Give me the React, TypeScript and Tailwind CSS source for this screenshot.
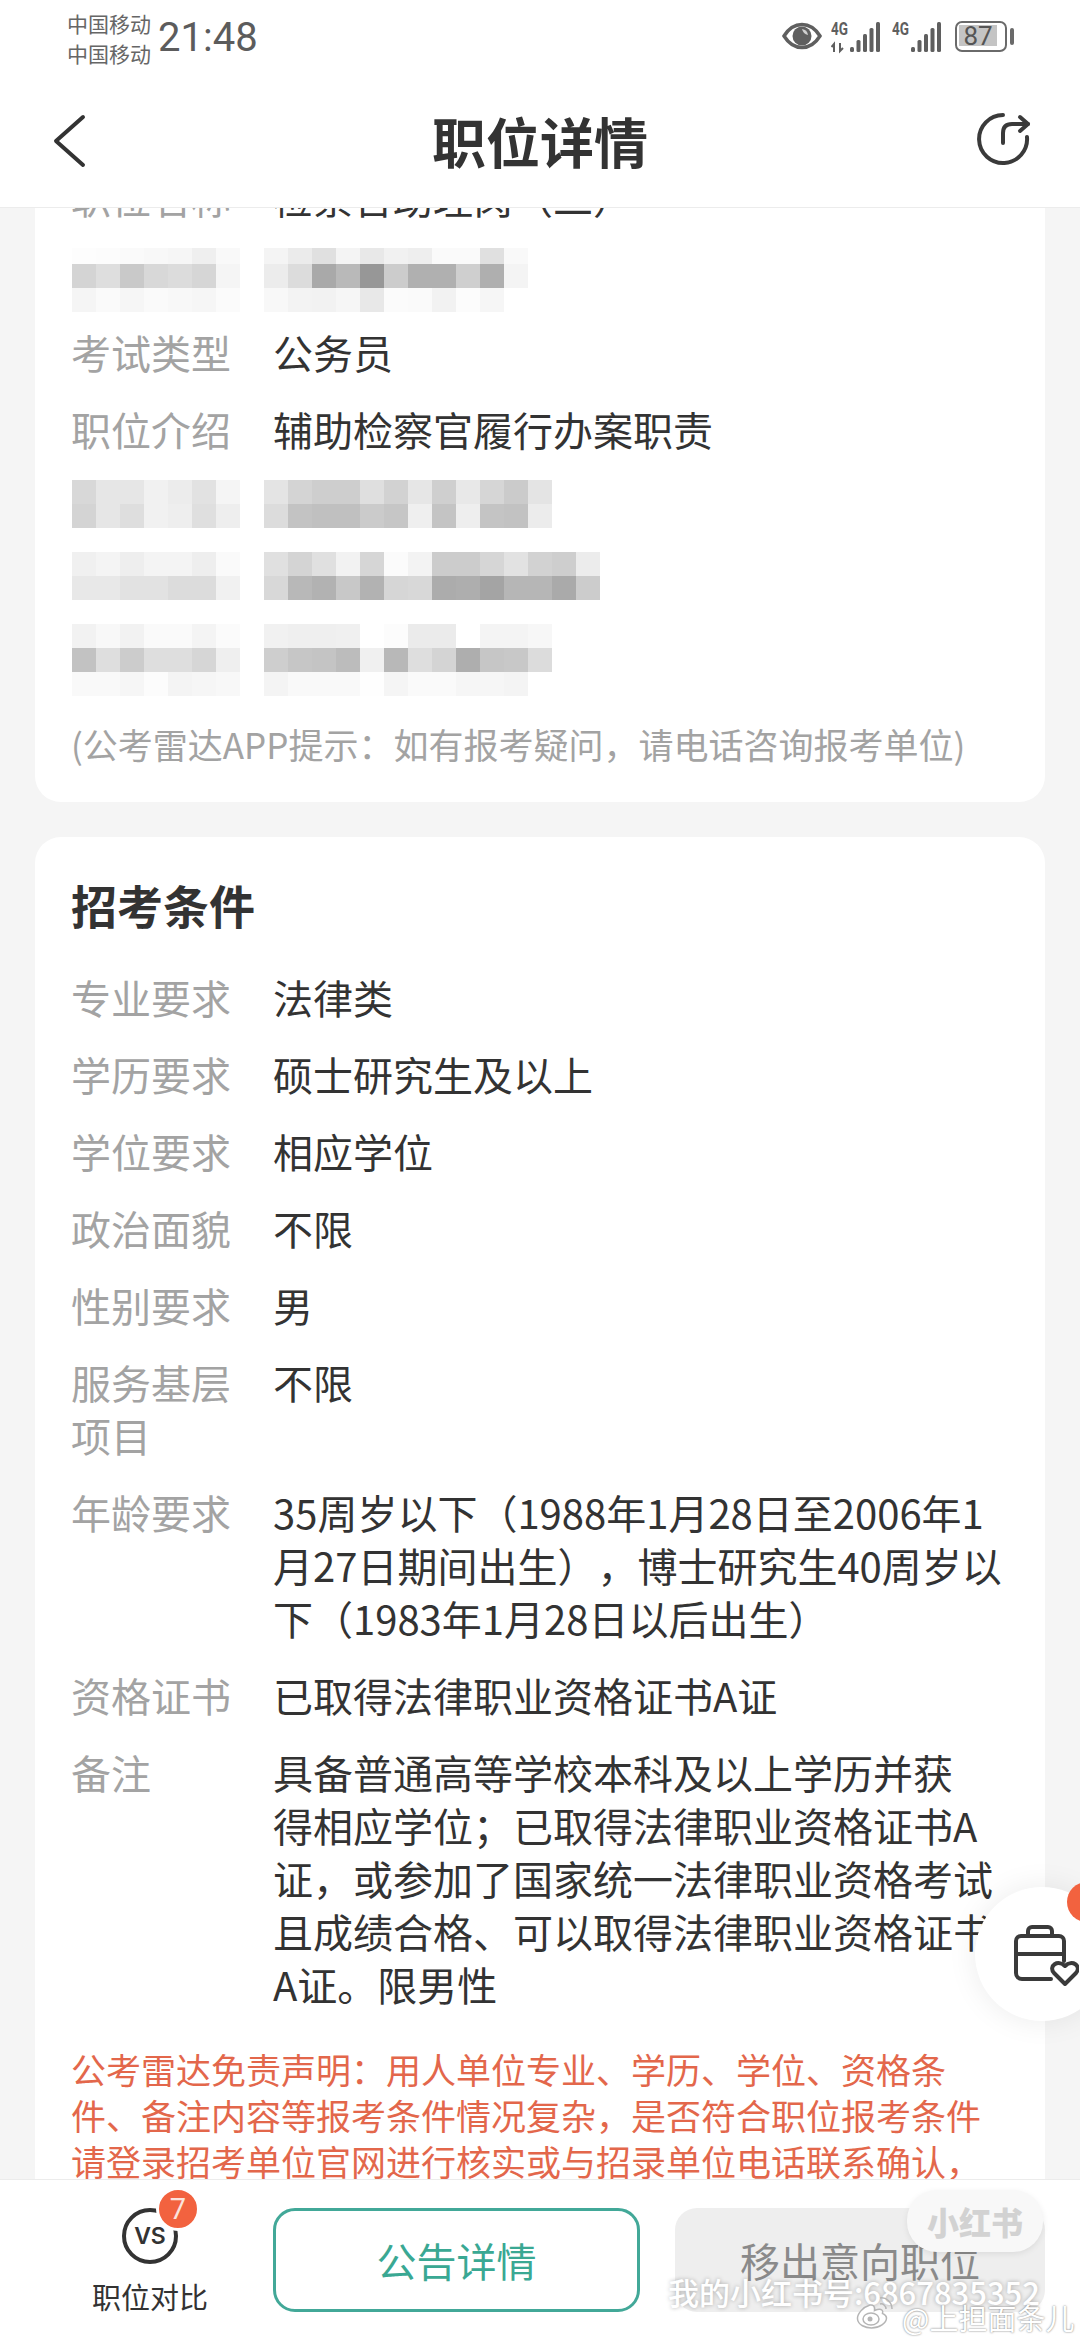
import type { ReactNode } from 'react';

// mosaic (redacted) blocks, tile grays read off the screenshot
const topLabel = [
  ['#fdfdfd', '#fcfcfc', '#fafafa', '#f8f8f8', '#f6f6f6', '#efefef', '#f9f9f9'],
  ['#d4d4d4', '#dedede', '#c9c9c9', '#d8d8d8', '#dcdcdc', '#d6d6d6', '#f5f5f5'],
  ['#f5f5f5', '#fafafa', '#f6f6f6', '#fafafa', '#f8f8f8', '#f6f6f6', '#fbfbfb'],
];
const topValue = [
  ['#f4f4f4', '#ebebeb', '#e0e0e0', '#f4f4f4', '#e8e8e8', '#f1f1f1', '#eeeeee', '#fafafa', '#fafafa', '#e0e0e0', '#f9f9f9'],
  ['#ececec', '#dcdcdc', '#a9a9a9', '#b9b9b9', '#979797', '#cccccc', '#b0b0b0', '#b0b0b0', '#cfcfcf', '#afafaf', '#f4f4f4'],
  ['#f8f8f8', '#f3f3f3', '#f2f2f2', '#f6f6f6', '#e8e8e8', '#fbfbfb', '#fafafa', '#f2f2f2', '#fcfcfc', '#f6f6f6', '#ffffff'],
];
const blocks = [
  {
    label: [
      ['#d8d8d8', '#e6e6e6', '#e6e6e6', '#f1f1f1', '#ececec', '#e2e2e2', '#f5f5f5'],
      ['#d4d4d4', '#e6e6e6', '#dedede', '#f1f1f1', '#eeeeee', '#dfdfdf', '#eeeeee'],
    ],
    value: [
      ['#e4e4e4', '#d4d4d4', '#cecece', '#cecece', '#dfdfdf', '#d2d2d2', '#e6e6e6', '#cfcfcf', '#e8e8e8', '#d6d6d6', '#cbcbcb', '#e4e4e4'],
      ['#dcdcdc', '#c3c3c3', '#c0c0c0', '#c0c0c0', '#cbcbcb', '#c6c6c6', '#efefef', '#c4c4c4', '#eeeeee', '#c4c4c4', '#c2c2c2', '#ececec'],
    ],
  },
  {
    label: [
      ['#f0f0f0', '#f4f4f4', '#eeeeee', '#f4f4f4', '#f4f4f4', '#eeeeee', '#fafafa'],
      ['#e8e8e8', '#e8e8e8', '#e2e2e2', '#e2e2e2', '#dcdcdc', '#dcdcdc', '#f1f1f1'],
    ],
    value: [
      ['#e0e0e0', '#d4d4d4', '#e0e0e0', '#f2f2f2', '#d6d6d6', '#fbfbfb', '#f3f3f3', '#cccccc', '#cccccc', '#d6d6d6', '#e2e2e2', '#d2d2d2', '#cecece', '#ececec'],
      ['#d8d8d8', '#b8b8b8', '#b2b2b2', '#c8c8c8', '#b2b2b2', '#d6d6d6', '#d8d8d8', '#acacac', '#aeaeae', '#a4a4a4', '#b6b6b6', '#b6b6b6', '#aaaaaa', '#cccccc'],
    ],
  },
  {
    label: [
      ['#f2f2f2', '#f8f8f8', '#f2f2f2', '#fafafa', '#fafafa', '#f4f4f4', '#fbfbfb'],
      ['#c2c2c2', '#dedede', '#cccccc', '#dedede', '#dedede', '#d6d6d6', '#efefef'],
      ['#f9f9f9', '#f9f9f9', '#f6f6f6', '#fcfcfc', '#f4f4f4', '#f6f6f6', '#f8f8f8'],
    ],
    value: [
      ['#f1f1f1', '#efefef', '#efefef', '#f0f0f0', '#ffffff', '#fcfcfc', '#ebebeb', '#ebebeb', '#ffffff', '#f4f4f4', '#f4f4f4', '#f7f7f7'],
      ['#cecece', '#c6c6c6', '#c4c4c4', '#bcbcbc', '#f0f0f0', '#b8b8b8', '#dedede', '#d4d4d4', '#aeaeae', '#c6c6c6', '#c8c8c8', '#dcdcdc'],
      ['#f4f4f4', '#f9f9f9', '#f9f9f9', '#f9f9f9', '#fefefe', '#f5f5f5', '#fafafa', '#fafafa', '#f6f6f6', '#f6f6f6', '#f4f4f4', '#ffffff'],
    ],
  },
];

function Tiles({ rows, short }: { rows: string[][]; short?: boolean }) {
  return (
    <div className="flex flex-col">
      {rows.map((cells, i) => (
        <div key={i} className={`flex ${short && i === 0 ? 'h-4' : 'h-6'}`}>
          {cells.map((c, j) => (
            <div key={j} className="w-6" style={{ backgroundColor: c }} />
          ))}
        </div>
      ))}
    </div>
  );
}

function Mosaic({ label, value, short, className = '' }: { label: string[][]; value: string[][]; short?: boolean; className?: string }) {
  return (
    <div className={`flex gap-6 pl-px ${className}`}>
      <Tiles rows={label} short={short} />
      <Tiles rows={value} short={short} />
    </div>
  );
}

function Row({ label, children }: { label: ReactNode; children: ReactNode }) {
  return (
    <div className="flex mb-6 text-[40px] leading-[53px]">
      <div className="w-[160px] mr-[42px] shrink-0 text-[#a3a3a3]">{label}</div>
      <div className="text-[#333333] whitespace-nowrap">{children}</div>
    </div>
  );
}

function Signal({ dot }: { dot?: boolean }) {
  return (
    <svg width="50" height="32" viewBox="0 0 50 32" className="block">
      <text x="0" y="13" fontSize="18" fontWeight="700" fill="#5f5f5f" fontFamily="Roboto, sans-serif" textLength="17" lengthAdjust="spacingAndGlyphs">4G</text>
      {dot && <path d="M3 30v-8l-2.500 3M9 21v8l3-3" fill="none" stroke="#5f5f5f" strokeWidth="2" />}
      <g fill="#5f5f5f">
        <rect x="19" y="25" width="4" height="5" rx="1.500" />
        <rect x="25.500" y="18" width="4" height="12" rx="1.500" />
        <rect x="32" y="12" width="4" height="18" rx="1.500" />
        <rect x="38.500" y="6" width="4" height="24" rx="1.500" />
        <rect x="45" y="0" width="4" height="30" rx="1.500" />
      </g>
    </svg>
  );
}

export default function App() {
  return (
    <div className="relative w-[1080px] h-[2340px] overflow-hidden flex flex-col bg-[#f5f5f5] [text-spacing-trim:space-all] font-['Noto_Sans_CJK_SC','Noto_Sans',sans-serif]">
      {/* header */}
      <header className="shrink-0 z-10 h-[208px] bg-white border-b border-[#ececec]">
        <div className="h-[79px] flex items-start justify-between pl-[67px] pr-[66px] pt-2">
          <div className="flex items-center">
            <div className="text-[21px] leading-[30px] text-[#666666]">
              <div>中国移动</div>
              <div>中国移动</div>
            </div>
            <span className="ml-[7px] text-[40px] leading-[60px] text-[#5c5c5c] font-['Roboto',sans-serif]">21:48</span>
          </div>
          <div className="flex items-start pt-[14px]">
            <svg width="40" height="28" viewBox="0 0 40 28" className="mr-[9px]">
              <path d="M2 14C7 6 13 2.500 20 2.500S33 6 38 14c-5 8-11 11.500-18 11.500S7 22 2 14Z" fill="none" stroke="#5f5f5f" strokeWidth="3.500" />
              <circle cx="20" cy="14" r="9.500" fill="#5f5f5f" />
              <path d="M20 7a7 7 0 0 1 6 6 8 8 0 0 1-6-6Z" fill="#d0d0d0" />
            </svg>
            <div className="mr-3"><Signal dot /></div>
            <div className="-ml-px mr-[13px]"><Signal /></div>
            <div className="flex items-center -mt-px">
              <div className="w-[52px] h-[31px] rounded-[7px] border-[2.5px] border-[#6a6a6a] p-[2px]">
                <div className="w-[38px] h-[21px] bg-[#c4c4c4] flex items-center justify-center text-[26px] leading-none text-[#555555] font-['Roboto',sans-serif]">87</div>
              </div>
              <div className="ml-[3px] w-1 h-[17px] rounded-sm bg-[#6a6a6a]" />
            </div>
          </div>
        </div>
        <div className="relative h-[128px] flex items-center justify-center">
          <svg width="36" height="56" viewBox="0 0 36 56" className="absolute left-[51px] top-[34px]" fill="none" stroke="#333333" strokeWidth="4" strokeLinecap="round" strokeLinejoin="round">
            <path d="M32 4L5 28L32 52" />
          </svg>
          <h1 className="-mt-[5px] text-[54px] leading-none font-bold text-[#333333]">职位详情</h1>
          <svg width="90" height="80" viewBox="0 0 90 80" className="absolute left-[960px] top-[21px]" fill="none" stroke="#3a3a3a" strokeWidth="4" strokeLinecap="round" strokeLinejoin="round">
            <path d="M43 15A24 24 0 1 0 67 37" />
            <path d="M43 43V33Q43 24 52 24H68" />
            <path d="M60 17L68 24L60 31" />
          </svg>
        </div>
      </header>

      {/* scrolled content, first row cut by the header */}
      <main className="flex-1 min-h-0 overflow-hidden px-[35px]">
        <section className="-mt-[37px] bg-white rounded-b-[26px] pl-[36px] pr-9 pb-[35px]">
          <Row label="职位名称">检察官助理岗（二）</Row>
          <Mosaic label={topLabel} value={topValue} short className="mb-[14px]" />
          <Row label="考试类型">公务员</Row>
          <Row label="职位介绍">辅助检察官履行办案职责</Row>
          <div className="flex flex-col gap-6">
            {blocks.map((b, i) => (
              <Mosaic key={i} label={b.label} value={b.value} />
            ))}
          </div>
          <p className="mt-[25px] text-[35px] leading-[46px] text-[#a3a3a3] whitespace-nowrap">(公考雷达APP提示：如有报考疑问，请电话咨询报考单位)</p>
        </section>

        <section className="mt-[35px] bg-white rounded-t-[26px] pl-[36px] pr-9 pt-[37px]">
          <h2 className="text-[46px] leading-[60px] font-bold text-[#333333] mb-[37px]">招考条件</h2>
          <Row label="专业要求">法律类</Row>
          <Row label="学历要求">硕士研究生及以上</Row>
          <Row label="学位要求">相应学位</Row>
          <Row label="政治面貌">不限</Row>
          <Row label="性别要求">男</Row>
          <Row label={<>服务基层<br />项目</>}>不限</Row>
          <Row label="年龄要求">
            35周岁以下（1988年1月28日至2006年1<br />
            月27日期间出生），博士研究生40周岁以<br />
            下（1983年1月28日以后出生）
          </Row>
          <Row label="资格证书">已取得法律职业资格证书A证</Row>
          <Row label="备注">
            具备普通高等学校本科及以上学历并获<br />
            得相应学位；已取得法律职业资格证书A<br />
            证，或参加了国家统一法律职业资格考试<br />
            且成绩合格、可以取得法律职业资格证书<br />
            A证。限男性
          </Row>
          <p className="mt-[35px] text-[35px] leading-[46px] text-[#e3674b] whitespace-nowrap">
            公考雷达免责声明：用人单位专业、学历、学位、资格条<br />
            件、备注内容等报考条件情况复杂，是否符合职位报考条件<br />
            请登录招考单位官网进行核实或与招录单位电话联系确认，
          </p>
        </section>
      </main>

      {/* bottom bar */}
      <footer className="shrink-0 z-10 h-[161px] bg-white border-t border-[#ececec] flex items-start pt-[28px]">
        <div className="w-[273px] shrink-0 pl-[27px] flex flex-col items-center">
          <div className="relative w-[56px] h-[56px]">
            <div className="absolute inset-0 rounded-full border-[4px] border-[#333333] flex items-center justify-center text-[23px] leading-none font-semibold text-[#333333] font-['Inter',sans-serif]">VS</div>
            <div className="absolute -top-[21px] left-[34px] w-[44px] h-[44px] rounded-full bg-[#f2623f] border-[3px] border-white flex items-center justify-center text-[29px] leading-none text-[#fbe3dc] font-['Roboto',sans-serif]">7</div>
          </div>
          <span className="mt-[13px] text-[29px] leading-[38px] text-[#333333]">职位对比</span>
        </div>
        <button className="w-[367px] h-[104px] shrink-0 rounded-[22px] border-[3px] border-[#42a898] text-[40px] text-[#3aa893]">公告详情</button>
        <button className="ml-[35px] w-[370px] h-[104px] shrink-0 rounded-[22px] bg-[#eeeeee] text-[40px] text-[#8a8a8a]">移出意向职位</button>
      </footer>

      {/* floating favourites button */}
      <div className="absolute left-[975px] top-[1887px] w-[134px] h-[134px] rounded-full bg-white shadow-[0_0_30px_rgba(0,0,0,0.08)] z-20">
        <svg width="66" height="62" viewBox="0 0 66 62" className="absolute left-[38px] top-[37px]" fill="none" stroke="#3a3a3a" strokeWidth="4" strokeLinecap="round" strokeLinejoin="round">
          <path d="M15 12V7a4 4 0 0 1 4-4h16a4 4 0 0 1 4 4v5" />
          <path d="M38 55H9a6 6 0 0 1-6-6V17a5 5 0 0 1 5-5h38a5 5 0 0 1 5 5v20" />
          <path d="M3 30h48" />
          <path d="M52 60L41 49c-6-7 4-14 11-7 7-7 17 0 11 7Z" />
        </svg>
      </div>
      <div className="absolute left-[1067px] top-[1882px] w-[40px] h-[40px] rounded-full bg-[#f2623f] z-20" />

      {/* watermarks */}
      <div className="absolute left-[907px] top-[2190px] w-[136px] h-[62px] rounded-[30px] bg-[#f8f8f8] shadow-[0_2px_6px_rgba(0,0,0,0.08)] z-20 flex items-center justify-center text-[32px] font-black text-[#d2d2d2]">小红书</div>
      <div className="absolute left-[668px] top-[2270px] z-20 text-[31px] leading-[44px] font-medium text-white whitespace-nowrap [text-shadow:0_0_4px_rgba(0,0,0,0.3)]">我的小红书号:6867835352</div>
      <svg width="38" height="33" viewBox="0 0 38 33" className="absolute left-[856px] top-[2296px] z-20" fill="#ffffff" stroke="#b5b5b5" strokeWidth="1.500">
        <path d="M14 9C7 11 1 18 1.500 23c.5 6 8 9 14 9 8 0 15-5 15-10 0-3-3-4-4-4.500 1-3-1-5-5-4-2 .5-3 1-3 1 .5-4-1-6-4.500-5.500Z" />
        <ellipse cx="15" cy="23" rx="8" ry="6" />
        <circle cx="14" cy="23" r="2.500" fill="#b5b5b5" stroke="none" />
        <path d="M24 2c6-1 12 4 12 11M24 8c3-1 6 2 6 5" fill="none" />
      </svg>
      <div className="absolute left-[902px] top-[2296px] z-20 text-[29px] leading-[42px] text-white whitespace-nowrap [text-shadow:0_0_2px_rgba(0,0,0,0.6)]">@上担面条儿</div>
    </div>
  );
}
